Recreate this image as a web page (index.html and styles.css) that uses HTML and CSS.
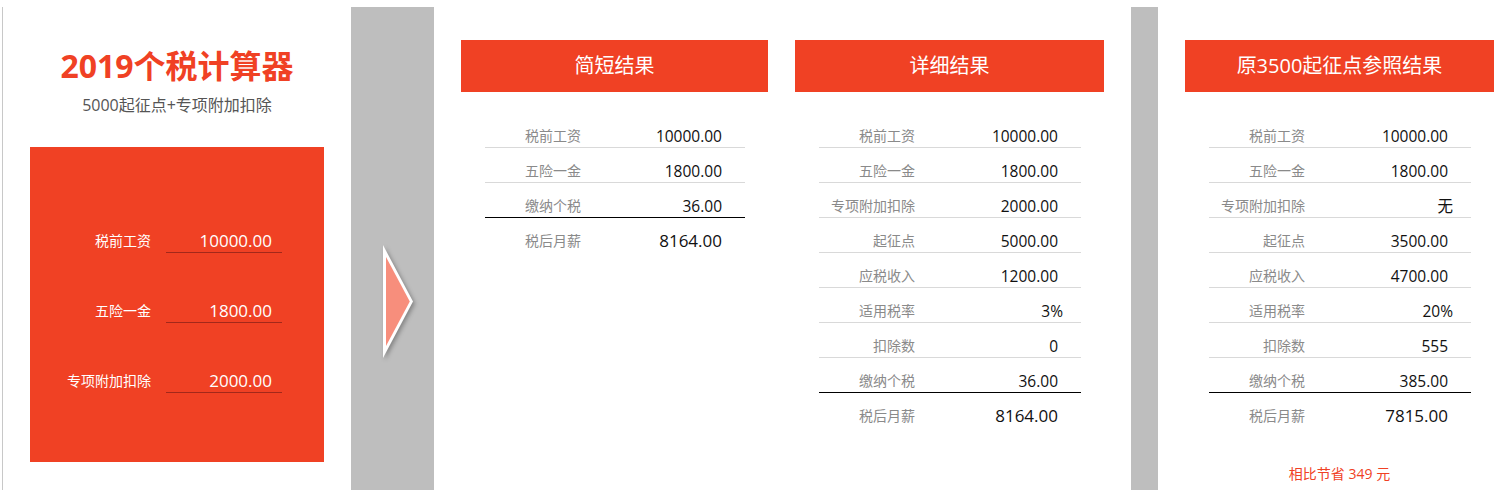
FILE: index.html
```html
<!DOCTYPE html>
<html lang="zh-CN">

<head>
    <meta charset="UTF-8">
    <meta name="viewport" content="width=device-width, initial-scale=1.0">
    <title>2019个税计算器</title>
    <link rel="stylesheet" href="styles.css">
</head>

<body>
    <div class="page">
        <section class="calc">
            <h1 class="calc-title">2019个税计算器</h1>
            <p class="calc-sub">5000起征点+专项附加扣除</p>
            <div class="calc-form">
                <div class="field">
                    <label for="salary">税前工资</label>
                    <input type="text" id="salary" value="10000.00">
                </div>
                <div class="field">
                    <label for="insurance">五险一金</label>
                    <input type="text" id="insurance" value="1800.00">
                </div>
                <div class="field">
                    <label for="special">专项附加扣除</label>
                    <input type="text" id="special" value="2000.00">
                </div>
            </div>
        </section>

        <div class="divider">
            <svg class="arrow" width="44" height="128" viewBox="0 0 44 128">
                <polygon points="4,5 4,118 34,61.5" fill="#ffffff" />
                <polygon points="7,17 7,106 30.8,61.5" fill="#f78e7c" />
            </svg>
        </div>

        <section class="results">
            <div class="card short">
                <div class="card-head">简短结果</div>
                <div class="rows">
                    <div class="row"><span class="label">税前工资</span><span class="value">10000.00</span></div>
                    <div class="row"><span class="label">五险一金</span><span class="value">1800.00</span></div>
                    <div class="row sum"><span class="label">缴纳个税</span><span class="value">36.00</span></div>
                    <div class="row total"><span class="label">税后月薪</span><span class="value">8164.00</span></div>
                </div>
            </div>

            <div class="card">
                <div class="card-head">详细结果</div>
                <div class="rows">
                    <div class="row"><span class="label">税前工资</span><span class="value">10000.00</span></div>
                    <div class="row"><span class="label">五险一金</span><span class="value">1800.00</span></div>
                    <div class="row"><span class="label">专项附加扣除</span><span class="value">2000.00</span></div>
                    <div class="row"><span class="label">起征点</span><span class="value">5000.00</span></div>
                    <div class="row"><span class="label">应税收入</span><span class="value">1200.00</span></div>
                    <div class="row"><span class="label">适用税率</span><span class="value wide">3%</span></div>
                    <div class="row"><span class="label">扣除数</span><span class="value">0</span></div>
                    <div class="row sum"><span class="label">缴纳个税</span><span class="value">36.00</span></div>
                    <div class="row total"><span class="label">税后月薪</span><span class="value">8164.00</span></div>
                </div>
            </div>
        </section>

        <div class="divider thin"></div>

        <section class="results reference">
            <div class="card">
                <div class="card-head">原3500起征点参照结果</div>
                <div class="rows">
                    <div class="row"><span class="label">税前工资</span><span class="value">10000.00</span></div>
                    <div class="row"><span class="label">五险一金</span><span class="value">1800.00</span></div>
                    <div class="row"><span class="label">专项附加扣除</span><span class="value wide">无</span></div>
                    <div class="row"><span class="label">起征点</span><span class="value">3500.00</span></div>
                    <div class="row"><span class="label">应税收入</span><span class="value">4700.00</span></div>
                    <div class="row"><span class="label">适用税率</span><span class="value wide">20%</span></div>
                    <div class="row"><span class="label">扣除数</span><span class="value">555</span></div>
                    <div class="row sum"><span class="label">缴纳个税</span><span class="value">385.00</span></div>
                    <div class="row total"><span class="label">税后月薪</span><span class="value">7815.00</span></div>
                </div>
                <p class="saving">相比节省 349 元</p>
            </div>
        </section>
    </div>
</body>

</html>
```

FILE: styles.css
```css
body {
    margin: 0;
    background-color: #ffffff;
    font-family: "Open Sans", "Noto Sans CJK SC", sans-serif;
    overflow: hidden;
}

.page {
    display: flex;
    margin: 7px 0 0 2px;
    height: 483px;
}

/* Left: input panel */

.calc {
    flex-shrink: 0;
    width: 349px;
    padding: 0 27px;
    box-sizing: border-box;
    border-left: 1px solid #c8c8c8;
}

.calc-title {
    margin: 39px 0 0;
    font-size: 32px;
    line-height: 40px;
    font-weight: bold;
    color: #f04124;
    text-align: center;
}

.calc-sub {
    margin: 8px 0 0;
    font-size: 16px;
    line-height: 22px;
    color: #555555;
    text-align: center;
}

.calc-form {
    margin-top: 31px;
    height: 315px;
    box-sizing: border-box;
    padding-top: 74px;
    background-color: #f04124;
    display: flex;
    flex-direction: column;
    gap: 38px;
}

.field {
    display: flex;
    align-items: flex-end;
    gap: 15px;
}

.field label {
    width: 121px;
    flex-shrink: 0;
    text-align: right;
    font-size: 14px;
    line-height: 20px;
    padding-bottom: 2px;
    color: #ffffff;
}

.field input {
    width: 106px;
    height: 20px;
    padding: 9px 10px 2px 0;
    box-sizing: content-box;
    border: none;
    border-bottom: 1px solid #a3281a;
    background: transparent;
    color: #ffffff;
    font-family: "Open Sans", sans-serif;
    font-size: 17px;
    text-align: right;
    outline: none;
}

/* Grey separators */

.divider {
    flex-shrink: 0;
    width: 83px;
    background-color: #bebebe;
}

.divider.thin {
    width: 27px;
}

.arrow {
    display: block;
    margin: 233px 0 0 28px;
    filter: drop-shadow(2px 2px 2px rgba(0, 0, 0, 0.3));
}

/* Result cards */

.results {
    flex-shrink: 0;
    display: flex;
    gap: 27px;
    padding: 33px 27px 0;
}

.results.reference {
    padding-right: 0;
}

.card {
    width: 309px;
}

.card.short {
    width: 307px;
}

.card-head {
    height: 52px;
    line-height: 52px;
    background-color: #f04124;
    color: #ffffff;
    font-size: 20px;
    text-align: center;
}

.rows {
    margin: 21px 23px 0 24px;
}

.row {
    display: flex;
    align-items: flex-end;
    padding: 13px 0 1px;
    line-height: 20px;
    border-bottom: 1px solid #d9d9d9;
}

.row.sum {
    border-bottom-color: #000000;
}

.row.total {
    border-bottom: none;
}

.label {
    width: 96px;
    flex-shrink: 0;
    text-align: right;
    font-size: 14px;
    color: #8a8a8a;
}

.value {
    flex: 1;
    padding-right: 23px;
    text-align: right;
    font-size: 15.5px;
    color: #111111;
}

.value.wide {
    padding-right: 18px;
}

.total .value {
    font-size: 17px;
}

.saving {
    margin: 37px 0 0;
    font-size: 14px;
    line-height: 20px;
    color: #f04124;
    text-align: center;
}
```
